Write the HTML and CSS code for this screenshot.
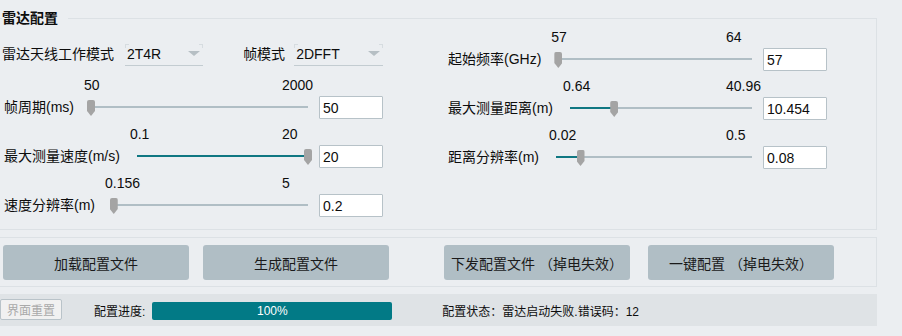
FILE: index.html
```html
<!DOCTYPE html>
<html lang="zh-CN">
  <head>
    <meta charset="UTF-8" />
    <meta name="viewport" content="width=device-width, initial-scale=1.0" />
    <title>雷达配置</title>
    <link rel="stylesheet" href="styles.css">
  </head>
  <body>
    <fieldset class="radar-panel">
      <legend>雷达配置</legend>
      <div class="radar-grid">
        <div class="column column-left">
          <div class="combo-row">
            <span class="field-label">雷达天线工作模式</span>
            <div class="combo combo-mode"><span>2T4R</span><i class="combo-arrow"></i></div>
            <span class="field-label frame-label">帧模式</span>
            <div class="combo combo-frame"><span>2DFFT</span><i class="combo-arrow"></i></div>
          </div>

          <div class="slider-row">
            <span class="field-label">帧周期(ms)</span>
            <div class="scale"><span class="scale-min">50</span><span class="scale-max"><span>2000</span></span></div>
            <div class="slider" style="--p: 0"><div class="groove"></div><div class="fill"></div><div class="handle"></div></div>
            <input class="value-input" type="text" value="50" />
          </div>

          <div class="slider-row">
            <span class="field-label">最大测量速度(m/s)</span>
            <div class="scale"><span class="scale-min">0.1</span><span class="scale-max"><span>20</span></span></div>
            <div class="slider" style="--p: 1"><div class="groove"></div><div class="fill"></div><div class="handle"></div></div>
            <input class="value-input" type="text" value="20" />
          </div>

          <div class="slider-row">
            <span class="field-label">速度分辨率(m)</span>
            <div class="scale"><span class="scale-min">0.156</span><span class="scale-max"><span>5</span></span></div>
            <div class="slider" style="--p: 0.009"><div class="groove"></div><div class="fill"></div><div class="handle"></div></div>
            <input class="value-input" type="text" value="0.2" />
          </div>
        </div>

        <div class="column column-right">
          <div class="slider-row">
            <span class="field-label">起始频率(GHz)</span>
            <div class="scale"><span class="scale-min">57</span><span class="scale-max"><span>64</span></span></div>
            <div class="slider" style="--p: 0"><div class="groove"></div><div class="fill"></div><div class="handle"></div></div>
            <input class="value-input" type="text" value="57" />
          </div>

          <div class="slider-row">
            <span class="field-label">最大测量距离(m)</span>
            <div class="scale"><span class="scale-min">0.64</span><span class="scale-max"><span>40.96</span></span></div>
            <div class="slider" style="--p: 0.243"><div class="groove"></div><div class="fill"></div><div class="handle"></div></div>
            <input class="value-input" type="text" value="10.454" />
          </div>

          <div class="slider-row">
            <span class="field-label">距离分辨率(m)</span>
            <div class="scale"><span class="scale-min">0.02</span><span class="scale-max"><span>0.5</span></span></div>
            <div class="slider" style="--p: 0.125"><div class="groove"></div><div class="fill"></div><div class="handle"></div></div>
            <input class="value-input" type="text" value="0.08" />
          </div>
        </div>
      </div>
    </fieldset>

    <div class="action-panel">
      <div class="button-group">
        <button class="action-button">加载配置文件</button>
        <button class="action-button">生成配置文件</button>
      </div>
      <div class="button-group button-group-right">
        <button class="action-button">下发配置文件 （掉电失效）</button>
        <button class="action-button">一键配置 （掉电失效）</button>
      </div>
    </div>

    <div class="status-bar">
      <button class="reset-button" disabled>界面重置</button>
      <span class="progress-label">配置进度:</span>
      <div class="progress"><span>100%</span></div>
      <span class="status-text">配置状态：雷达启动失败.错误码：12</span>
    </div>
  </body>
</html>
```

FILE: styles.css
```css
body {
  font-family: "Liberation Sans", "Noto Sans CJK SC", sans-serif;
  font-size: 14px;
  color: #0d0d0d;
  margin: 0;
  padding: 8px 0 0 0;
  background-color: #ebeef1;
}

.radar-panel {
  box-sizing: border-box;
  width: 877px;
  margin: 0;
  padding: 1px 0 12px 4px;
  border: 1px solid #dce1e5;
  border-left: none;
  min-width: 0;
}

.radar-panel legend {
  margin-left: -2px;
  padding: 0 10px 0 0;
  font-weight: bold;
  font-size: 14px;
  line-height: 20px;
  color: #0d0d0d;
}

.radar-grid {
  display: grid;
  grid-template-columns: 379px 379px;
  column-gap: 65px;
  align-items: start;
}

.column {
  display: flex;
  flex-direction: column;
  gap: 7px;
}

.column-left {
  margin-top: 13px;
}

.field-label {
  white-space: nowrap;
  line-height: 20px;
}

/* 下拉框 */
.combo-row {
  display: flex;
  align-items: center;
  height: 24px;
  margin-left: -2px;
  margin-bottom: 4px;
}

.combo {
  position: relative;
  display: flex;
  align-items: center;
  box-sizing: border-box;
  height: 24px;
  padding-left: 2px;
  border-bottom: 1px solid #c3ccd1;
  margin-left: 11px;
}

.combo::before,
.combo::after {
  content: "";
  position: absolute;
  top: 2px;
  width: 3px;
  height: 3px;
  border-top: 1px solid #d6dce0;
}

.combo::before {
  left: 0;
  border-left: 1px solid #d6dce0;
}

.combo::after {
  right: 0;
  border-right: 1px solid #d6dce0;
}

.combo-mode {
  width: 80px;
}

.combo-frame {
  width: 91px;
  margin-left: 9px;
}

.frame-label {
  margin-left: 40px;
}

.combo-arrow {
  margin-left: auto;
  margin-right: 3px;
  width: 0;
  height: 0;
  border-top: 5px solid #b6bfc4;
  border-left: 6px solid transparent;
  border-right: 6px solid transparent;
}

/* 滑块行 */
.slider-row {
  display: grid;
  grid-template-columns: auto 1fr 71px;
  grid-template-rows: 16px 24px;
  row-gap: 2px;
  align-items: center;
}

.slider-row .field-label {
  grid-row: 2;
  grid-column: 1;
}

.scale {
  grid-row: 1;
  grid-column: 2;
  display: flex;
  justify-content: space-between;
  margin-left: 13px;
  line-height: 16px;
  white-space: nowrap;
}

.scale-min {
  margin-left: -3px;
}

.scale-max {
  width: 30px;
}

.slider {
  grid-row: 2;
  grid-column: 2;
  position: relative;
  height: 24px;
  margin-left: 13px;
}

.groove {
  position: absolute;
  left: 4px;
  right: 4px;
  top: 11px;
  height: 2px;
  background-color: #b0bec5;
}

.fill {
  position: absolute;
  left: 4px;
  top: 11px;
  height: 2px;
  width: calc(var(--p) * (100% - 8px));
  background-color: #0f7782;
}

.handle {
  position: absolute;
  top: 5px;
  left: calc(var(--p) * (100% - 8px));
  width: 8px;
  height: 16px;
  background-color: #a4a4a4;
  border-radius: 2px 2px 0 0;
  clip-path: polygon(0 0, 100% 0, 100% 68%, 50% 100%, 0 68%);
}

.value-input {
  grid-row: 2;
  grid-column: 3;
  box-sizing: border-box;
  width: 64px;
  height: 23px;
  margin: 0 0 0 7px;
  padding: 2px 3px 0;
  border: 1px solid #b7c2c8;
  border-radius: 1px;
  background-color: #fff;
  font-family: "Liberation Sans", sans-serif;
  font-size: 14px;
  color: #0d0d0d;
}

/* 按钮区 */
.action-panel {
  box-sizing: border-box;
  width: 877px;
  margin-top: 7px;
  padding: 7px 0 6px 3px;
  border: 1px solid #dce1e5;
  border-left: none;
  display: grid;
  grid-template-columns: 441px 1fr;
}

.button-group {
  display: flex;
  gap: 14px;
}

.button-group-right {
  gap: 18px;
}

.action-button {
  width: 186px;
  height: 35px;
  padding: 0;
  border: none;
  border-radius: 3px;
  background-color: #b0bec5;
  font-family: "Liberation Sans", "Noto Sans CJK SC", sans-serif;
  font-size: 14px;
  color: #1a1a1a;
  white-space: nowrap;
}

/* 状态栏 */
.status-bar {
  box-sizing: border-box;
  width: 877px;
  height: 32px;
  margin-top: 7px;
  display: flex;
  align-items: center;
  background-color: #dfe3e6;
  font-size: 12px;
}

.reset-button {
  box-sizing: border-box;
  width: 62px;
  height: 21px;
  padding: 0;
  margin-top: -1px;
  border: 1px solid #b9c3c9;
  border-radius: 2px;
  background-color: #f1f1f1;
  font-family: "Liberation Sans", "Noto Sans CJK SC", sans-serif;
  font-size: 12px;
  color: #a9a9a9;
}

.progress-label {
  margin-left: 32px;
}

.progress {
  width: 240px;
  height: 18px;
  margin-left: 7px;
  margin-top: 2px;
  border-radius: 2px;
  background-color: #027a86;
  color: #fff;
  text-align: center;
  line-height: 18px;
}

.status-text {
  margin-left: 50px;
}
```
